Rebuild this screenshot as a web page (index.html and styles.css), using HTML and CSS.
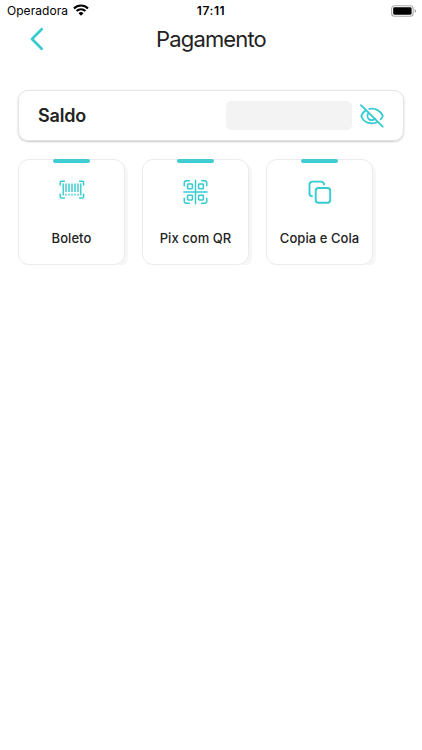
FILE: index.html
```html
<!DOCTYPE html>
<html lang="pt-BR">
<head>
<meta charset="utf-8">
<meta name="viewport" content="width=device-width, initial-scale=1">
<title>Pagamento</title>
<link rel="stylesheet" href="styles.css">
</head>
<body>
<div class="status">
  <div class="carrier"><span>Operadora</span>
    <svg class="wifi" width="16" height="12" viewBox="0 0 16 12"><g fill="none" stroke="currentColor" stroke-width="2.1"><path d="M1 4.4a10 10 0 0 1 14 0"/><path d="M3.6 7.1a6.2 6.2 0 0 1 8.8 0"/></g><path fill="currentColor" d="M5.5 9.2a3.6 3.6 0 0 1 5 0L8 11.7z"/></svg>
  </div>
  <time class="clock">17:11</time>
  <svg class="battery" width="26" height="12" viewBox="0 0 26 12"><rect x=".6" y=".7" width="21.6" height="10.6" rx="3" fill="none" stroke="#aaa" stroke-width="1.1"/><rect x="2.2" y="2.3" width="18.4" height="7.4" rx="1.4"/><path d="M23.7 4.2q1.4.5 1.4 1.8t-1.4 1.8z" fill="#999"/></svg>
</div>
<header class="header">
  <svg class="back" width="16" height="24" viewBox="0 0 16 24"><path d="M12.7 2.3 3 12l9.7 9.7"/></svg>
  <h1 class="title">Pagamento</h1>
</header>
<main class="content">
  <section class="balance">
    <h2 class="balance-label">Saldo</h2>
    <div class="balance-value"></div>
    <svg class="eye" width="24" height="24" viewBox="0 0 24 24"><path d="M1 1.2 22.7 22.7"/><path d="M6.1 6.1C3.8 7.4 2 9.6 1.2 12c1.6 4.3 5.8 7.3 10.8 7.3 2 0 3.8-.4 5.5-1.3"/><path d="M9.2 4.9c6.1-1.1 11.7 2.1 13.6 7.1-.5 1.3-1.2 2.4-2.2 3.4"/><path d="M8.5 9.1a4.3 4.3 0 0 0 6.6 5.6"/></svg>
  </section>
  <nav class="options">
    <a class="card">
      <svg class="icon" width="26" height="26" viewBox="0 0 26 26"><path d="M1.2 6V3.5Q1.2 2.2 2.5 2.2H5.4M20.6 2.2h2.7q1.3 0 1.3 1.3V6M1.2 15.2v2.5q0 1.3 1.3 1.3h2.9M20.6 19h2.7q1.3 0 1.3-1.3v-2.5" stroke-width="1.5"/><path d="M4.2 4.6v12M7 4.6v8.4M10 4.6v8.4M13 4.6v8.4M16 4.6v8.4M19 4.6v8.4M21.8 4.6v12M7 14.7v1.9M10 14.7v1.9M13 14.7v1.9M16 14.7v1.9M19 14.7v1.9" stroke-width="1.4" stroke-linecap="butt"/></svg>
      <span class="card-label">Boleto</span>
    </a>
    <a class="card">
      <svg class="icon" width="26" height="26" viewBox="0 0 26 26"><path d="M1.2 6.8V4q0-2.3 2.3-2.3h2.8M18.7 1.7h2.8q2.3 0 2.3 2.3v2.8M1.2 19.2V22q0 2.3 2.3 2.3h2.8M18.7 24.3h2.8q2.3 0 2.3-2.3v-2.8M12.5 1.3v23.4M.8 13h23.4" stroke-width="1.45"/><g stroke-width="1.5"><rect x="4.6" y="5" width="4.8" height="4.8" rx=".7"/><rect x="15.6" y="5" width="4.8" height="4.8" rx=".7"/><rect x="4.6" y="16.2" width="4.8" height="4.8" rx=".7"/><rect x="15.6" y="16.2" width="4.8" height="4.8" rx=".7"/></g></svg>
      <span class="card-label">Pix com QR</span>
    </a>
    <a class="card">
      <svg class="icon" width="26" height="26" viewBox="0 0 26 26"><rect x="8.7" y="9" width="14.5" height="14.7" rx="2.7"/><path d="M5 17.2q-2.5-.3-2.5-2.7V5.6Q2.5 2.6 5.5 2.6h8.6q2.6 0 3 2.8"/></svg>
      <span class="card-label">Copia e Cola</span>
    </a>
  </nav>
</main>
</body>
</html>
```
FILE: styles.css
```css
* { box-sizing: border-box; }
body {
  margin: 0;
  background: #fff;
  color: #222;
  font-family: Inter, "Liberation Sans", sans-serif;
}
svg { display: block; flex: none; }
h1, h2 { margin: 0; }
.status {
  display: grid;
  grid-template-columns: 1fr auto 1fr;
  align-items: center;
  height: 22px;
  padding: 0 5px 0 7px;
  color: #000;
}
.carrier {
  display: flex;
  align-items: center;
  gap: 5px;
  margin-top: -1px;
  font-size: 12px;
  letter-spacing: 0.05px;
}
.wifi { margin-top: -1px; }
.clock {
  margin: -1px 2px 0 0;
  font-size: 12px;
  font-weight: 600;
  letter-spacing: 0.6px;
}
.battery { justify-self: end; margin-top: -1px; }
.header {
  display: grid;
  grid-template-columns: 29px 1fr 29px;
  align-items: center;
  height: 34px;
  padding: 0 29px;
}
.back { fill: none; stroke: #36cbd1; stroke-width: 2.7; stroke-linecap: round; stroke-linejoin: round; }
.title {
  text-align: center;
  font-size: 22px;
  font-weight: 400;
  letter-spacing: -0.85px;
}
.content { padding: 34px 18px 0; }
.balance {
  display: flex;
  align-items: center;
  height: 51px;
  padding: 0 19px;
  border: 1px solid #e4e4e4;
  border-radius: 10px;
  box-shadow: 0 1px 2px rgba(0, 0, 0, 0.22);
}
.balance-label { font-size: 18px; font-weight: 600; letter-spacing: -0.2px; }
.balance-value {
  width: 126px;
  height: 29px;
  margin-left: auto;
  border-radius: 5px;
  background: #f3f3f3;
}
.eye { margin-left: 8px; fill: none; stroke: #36cbd1; stroke-width: 1.8; stroke-linecap: round; }
.options { display: flex; gap: 17px; margin-top: 18px; }
.card {
  display: flex;
  flex-direction: column;
  align-items: center;
  width: 107px;
  height: 106px;
  border: 1px solid #ebebeb;
  border-radius: 11px;
  background: #fff;
  box-shadow: 3px 3px 1px #f6f6f6;
}
.card::before {
  content: "";
  width: 37px;
  height: 4px;
  margin-top: -1px;
  border-radius: 2px;
  background: #3fccd2;
}
.icon {
  margin-top: 16px;
  fill: none;
  stroke: #36cbd1;
  stroke-width: 1.9;
  stroke-linecap: round;
  stroke-linejoin: round;
}
.card-label {
  margin-top: 25px;
  font-size: 13px;
  line-height: 16px;
  font-weight: 500;
  letter-spacing: 0.05px;
  white-space: nowrap;
}
```
